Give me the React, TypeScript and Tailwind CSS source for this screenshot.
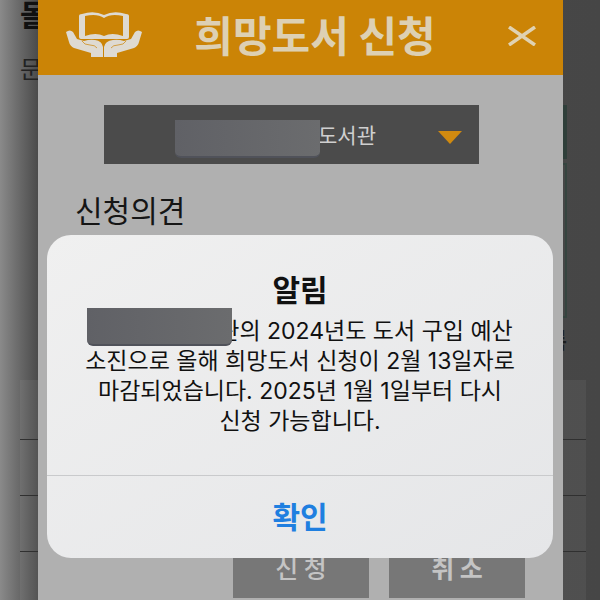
const KR = "font-['Noto_Sans_CJK_KR',sans-serif]"
const ALERT_FONT = "font-['Inter','Noto_Sans_CJK_KR',sans-serif]"

function BookInHands() {
  return (
    <svg viewBox="0 0 76 48" className="h-12 w-[76px]" fill="#dedad2" aria-hidden>
      <path
        fillRule="evenodd"
        d="M13 4 Q13 2 16 2 Q28 -2 38 3 Q48 -2 60 2 Q63 2 63 4 V25 Q63 27 61 27 H15 Q13 27 13 25 Z M19 4 V24 Q30 20 38 24 Q46 20 57 24 V4 Q45 1 38 6 Q31 1 19 4 Z"
      />
      <path d="M0 20 Q4 17 7 20 L11 27 L18 29 Q24 27 29 28 Q36 29 37 35 V45 H25 V41 L8 36 Q4 34 3 30 Z" />
      <path d="M76 20 Q72 17 69 20 L65 27 L58 29 Q52 27 47 28 Q39 29 38 35 V45 H51 V41 L68 36 Q72 34 73 30 Z" />
      <path d="M16 29 Q18 33 24 33 Q29 33 31 36 M60 29 Q58 33 52 33 Q47 33 45 36 M37.5 32 V45" fill="none" stroke="#cb8406" strokeWidth="0.7" />
    </svg>
  )
}

// 개인정보를 가리는 회색 띠
function Redaction({ className }: { className: string }) {
  return (
    <span
      aria-hidden
      className={`h-[38px] w-[145px] rounded-b-md border-b-2 border-[#50525a] bg-linear-to-r from-[#606166] to-[#6b6c6e] ${className}`}
    />
  )
}

// 팝업 뒤로 어둡게 비치는 원래 페이지
function DimmedPage() {
  return (
    <div
      aria-hidden
      className="absolute inset-0 flex flex-col bg-linear-to-r from-[#8a8a8a] via-[#4b4b4b] via-[38px] to-[#464646] pr-[14px] pl-5"
    >
      <div className="h-[105px]">
        <p className="h-[50px] text-[30px] leading-[26px] font-bold text-[#101010]">돌</p>
        <p className="text-[24px] leading-9 text-[#222]">문</p>
      </div>
      <div className="mr-[19px] ml-auto h-[54px] w-10 bg-[#2f3f3a]" />
      <div className="mt-1 mr-[19px] ml-auto h-[155px] w-10 border-2 border-[#35443f]" />
      <p className="mr-[19px] h-[62px] pt-1 text-right text-[22px] font-bold text-[#1c1c1c]">록</p>
      <div className="flex-1 bg-white/5">
        <div className="h-[60px] border-b border-[#303030]" />
        <div className="h-14 border-b border-[#303030]" />
        <div className="h-14 border-b border-[#303030]" />
      </div>
    </div>
  )
}

function RequestSheet() {
  return (
    <main className="relative mr-[37px] ml-[38px] flex min-h-screen flex-col bg-[#b0b0b0]">
      <header className="flex h-[75px] items-center bg-[#cb8406] pr-[27px] pb-1 pl-7">
        <BookInHands />
        <h1 className="flex-1 pb-1 pl-9 text-center text-[42px] leading-[60px] font-bold whitespace-nowrap text-[#ddd0b3]">
          희망도서 신청
        </h1>
        <button type="button" aria-label="닫기" className="cursor-pointer pl-14">
          <svg viewBox="0 0 28 20" className="h-5 w-7" stroke="#e0d2b2" strokeWidth="3.5">
            <path d="M1 1 L27 19 M27 1 L1 19" />
          </svg>
        </button>
      </header>

      <div className="relative mt-[30px] mr-[84px] ml-[66px]">
        <select
          aria-label="도서관"
          className="h-[59px] w-full appearance-none bg-[#4b4b4b] pl-[214px] text-[21px] text-[#cfcfcf]"
        >
          <option>도서관</option>
        </select>
        <Redaction className="absolute top-[15px] left-[71px]" />
        <svg viewBox="0 0 24 13" className="pointer-events-none absolute top-[26px] right-[17px] h-[13px] w-6" fill="#d08a10">
          <path d="M0 0 H24 L12 13 Z" />
        </svg>
      </div>

      <h2 className="mt-6 ml-[37px] text-[30px] leading-[42px] text-[#151515]">신청의견</h2>

      <div className="mt-auto flex justify-end gap-5 pr-[38px] pb-[2px]">
        <button type="button" className="h-14 w-[136px] bg-[#777] pb-1 text-[25px] font-medium text-[#c4c4c4]">신 청</button>
        <button type="button" className="h-14 w-[136px] bg-[#777] pb-1 text-[25px] font-bold text-[#c4c4c4]">취 소</button>
      </div>
    </main>
  )
}

function Alert() {
  return (
    <div
      role="alertdialog"
      aria-labelledby="alert-title"
      aria-describedby="alert-body"
      className={`absolute inset-x-[47px] top-[235px] overflow-hidden rounded-[24px] bg-linear-to-br from-[#f0f0f0] to-[#e5e6e8] text-center text-[#111] ${ALERT_FONT}`}
    >
      <div className="px-8 pt-[34px] pb-[39px]">
        <h2 id="alert-title" className="text-[30px] leading-[42px] font-bold">알림</h2>
        <p id="alert-body" className="pt-[5px] text-[23px] leading-[30px] whitespace-nowrap">
          <Redaction className="relative -mt-2 -mr-[14px] inline-block align-bottom" />
          관의 2024년도 도서 구입 예산
          <br />
          소진으로 올해 희망도서 신청이 2월 13일자로
          <br />
          마감되었습니다. 2025년 1월 1일부터 다시
          <br />
          신청 가능합니다.
        </p>
      </div>
      <button
        type="button"
        className="h-[83px] w-full cursor-pointer border-t border-[#c9cacc] text-[30px] font-bold text-[#1f7fe0]"
      >
        확인
      </button>
    </div>
  )
}

export default function App() {
  return (
    <div className={`relative min-h-screen overflow-hidden ${KR}`}>
      <DimmedPage />
      <RequestSheet />
      <Alert />
    </div>
  )
}
